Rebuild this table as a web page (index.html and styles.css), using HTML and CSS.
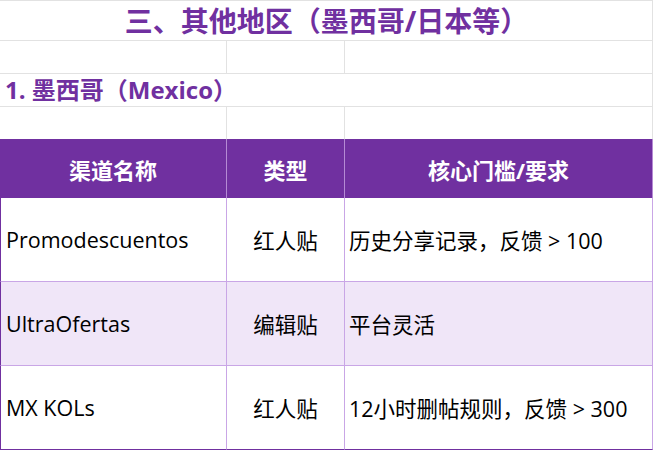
FILE: index.html
```html
<!DOCTYPE html>
<html lang="zh-CN">
<head>
<meta charset="utf-8">
<title>三、其他地区</title>
<link rel="stylesheet" href="styles.css">
</head>
<body>
<div class="sheet">
  <div class="title">三、其他地区（墨西哥/日本等）</div>

  <div class="cell blank"></div>
  <div class="cell blank"></div>
  <div class="cell blank"></div>

  <div class="cell section span2">1. 墨西哥（Mexico）</div>
  <div class="cell blank"></div>

  <div class="cell blank last"></div>
  <div class="cell blank last"></div>
  <div class="cell blank last"></div>

  <div class="th">渠道名称</div>
  <div class="th">类型</div>
  <div class="th">核心门槛/要求</div>

  <div class="td name">Promodescuentos</div>
  <div class="td type">红人贴</div>
  <div class="td req">历史分享记录，反馈 &gt; 100</div>

  <div class="td name alt">UltraOfertas</div>
  <div class="td type alt">编辑贴</div>
  <div class="td req alt">平台灵活</div>

  <div class="td name end">MX KOLs</div>
  <div class="td type end">红人贴</div>
  <div class="td req end">12小时删帖规则，反馈 &gt; 300</div>
</div>
</body>
</html>
```

FILE: styles.css
```css
* { box-sizing: border-box; }

html, body {
  margin: 0;
  padding: 0;
  background: #ffffff;
}

body {
  font-family: "Open Sans", "Noto Sans CJK SC", sans-serif;
  width: 653px;
  height: 450px;
  overflow: hidden;
}

.sheet {
  display: grid;
  grid-template-columns: 227px 118px 308px;
  grid-template-rows: 41px 33px 33px 32px 59px 84px 84px 84px;
}

.title {
  grid-column: 1 / -1;
  border-top: 1px solid #e2e2e2;
  border-bottom: 1px solid #e2e2e2;
  border-right: 1px solid #e2e2e2;
  display: flex;
  align-items: center;
  justify-content: center;
  color: #7030a0;
  font-weight: 700;
  font-size: 28px;
  line-height: 1;
  padding-left: 1px;
}

.cell {
  border-right: 1px solid #e2e2e2;
  border-bottom: 1px solid #e2e2e2;
}

.cell.last {
  border-bottom: none;
}

.span2 {
  grid-column: span 2;
}

.section {
  display: flex;
  align-items: center;
  padding-left: 5px;
  color: #7030a0;
  font-weight: 700;
  font-size: 24px;
  line-height: 1;
  white-space: nowrap;
  border-right: none;
}

.th {
  background: #7030a0;
  color: #ffffff;
  font-weight: 700;
  font-size: 22px;
  display: flex;
  align-items: center;
  justify-content: center;
  border-right: 1px solid #b58ad4;
}

.td {
  display: flex;
  align-items: center;
  font-size: 21.5px;
  color: #000000;
  border-right: 1px solid #c9a6e6;
  border-bottom: 1px solid #c9a6e6;
  white-space: nowrap;
}

.td.alt {
  background: #f0e6f8;
}

.td.end {
  border-bottom: 1px solid #7030a0;
}

.name {
  border-left: 1px solid #7030a0;
  padding-left: 5px;
}

.type {
  justify-content: center;
}

.req {
  padding-left: 4px;
}
```
